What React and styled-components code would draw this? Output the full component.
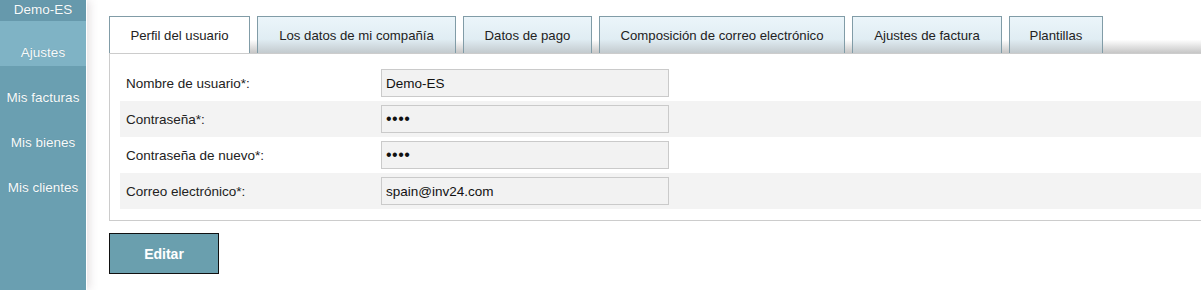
import React from "react";
import styled, { createGlobalStyle } from "styled-components";

const Global = createGlobalStyle`
  html, body { margin: 0; padding: 0; background: #fff; overflow: hidden; }
  body { font-family: "Liberation Sans", Arial, sans-serif; font-size: 13px; color: #222; }
  * { box-sizing: border-box; }
`;

const Page = styled.div`
  display: flex;
  min-height: 290px;
  width: 1201px;
  overflow: hidden;
`;

const Sidebar = styled.nav`
  width: 87px;
  flex: 0 0 87px;
  background: #6a9fb1;
  border-right: 1px solid #fff;
  box-shadow: 2px 0 9px rgba(90, 60, 70, 0.18);
  display: flex;
  flex-direction: column;
  min-height: 290px;
  position: relative;
  z-index: 1;
`;

const SideUser = styled.div`
  height: 21px;
  line-height: 20px;
  text-align: center;
  color: #f7fbfd;
  background: #6699ac;
  font-size: 13.5px;
  text-shadow: 0 0 1px rgba(0, 0, 0, 0.2);
`;

const SideItem = styled.div`
  height: 45px;
  padding-top: 24px;
  line-height: 16px;
  text-align: center;
  font-size: 13.5px;
  color: #f7fbfd;
  white-space: nowrap;
  background: ${(p) => (p.$active ? "#7fb3c5" : "transparent")};
  text-shadow: 0 0 1px rgba(0, 0, 0, 0.2);
`;

const Main = styled.main`
  flex: 1;
  min-width: 0;
  padding: 16px 0 0 22px;
`;

const TabBar = styled.div`
  display: flex;
  gap: 7px;
  height: 37px;
  width: 1150px;
  background: linear-gradient(to bottom, #fff 0%, #fff 64%, #c6c6c6 100%);
`;

const Tab = styled.div`
  width: ${(p) => p.$w}px;
  height: 37px;
  display: flex;
  align-items: center;
  justify-content: center;
  white-space: nowrap;
  font-size: 13.2px;
  color: #222;
  border: 1px solid #819ca7;
  border-bottom: none;
  background: ${(p) =>
    p.$active
      ? "#fff"
      : "linear-gradient(to bottom, #ebf5fa 0%, #e0edf3 62%, #c3cace 100%)"};
`;

const Panel = styled.section`
  width: 1150px;
  border: 1px solid #cccccc;
  border-right: none;
  padding: 11px 0 11px 10px;
`;

const Row = styled.div`
  display: flex;
  align-items: center;
  height: 36px;
  padding-left: 6px;
  background: ${(p) => (p.$striped ? "#f3f3f3" : "transparent")};
`;

const Label = styled.div`
  width: 255px;
  font-size: 13.5px;
  color: #222;
`;

const Field = styled.input`
  width: 288px;
  height: 28px;
  border: 1px solid #cacaca;
  background: #f2f2f2;
  padding: 0 4px;
  font-family: "Liberation Sans", Arial, sans-serif;
  font-size: ${(p) => (p.type === "password" ? "16px" : "13.5px")};
  letter-spacing: ${(p) => (p.type === "password" ? "0.5px" : "0")};
  color: #111;
  outline: none;
`;

const Button = styled.button`
  margin-top: 12px;
  width: 110px;
  height: 41px;
  background: #6a9fae;
  border: 1px solid #111;
  color: #fff;
  font-family: "Liberation Sans", Arial, sans-serif;
  font-weight: bold;
  font-size: 14px;
  cursor: pointer;
`;

const tabs = [
  ["Perfil del usuario", 141, true],
  ["Los datos de mi compañía", 199],
  ["Datos de pago", 129],
  ["Composición de correo electrónico", 246],
  ["Ajustes de factura", 150],
  ["Plantillas", 94],
];

const rows = [
  ["Nombre de usuario*:", "Demo-ES", "text"],
  ["Contraseña*:", "abcd", "password"],
  ["Contraseña de nuevo*:", "abcd", "password"],
  ["Correo electrónico*:", "spain@inv24.com", "text"],
];

export default function App() {
  return (
    <>
      <Global />
      <Page>
        <Sidebar>
          <SideUser>Demo-ES</SideUser>
          <SideItem $active>Ajustes</SideItem>
          <SideItem>Mis facturas</SideItem>
          <SideItem>Mis bienes</SideItem>
          <SideItem>Mis clientes</SideItem>
        </Sidebar>
        <Main>
          <TabBar>
            {tabs.map(([t, w, a]) => (
              <Tab key={t} $w={w} $active={a}>
                {t}
              </Tab>
            ))}
          </TabBar>
          <Panel>
            {rows.map(([l, v, type], i) => (
              <Row key={l} $striped={i % 2 === 1}>
                <Label>{l}</Label>
                <Field type={type} value={v} readOnly />
              </Row>
            ))}
          </Panel>
          <Button>Editar</Button>
        </Main>
      </Page>
    </>
  );
}
